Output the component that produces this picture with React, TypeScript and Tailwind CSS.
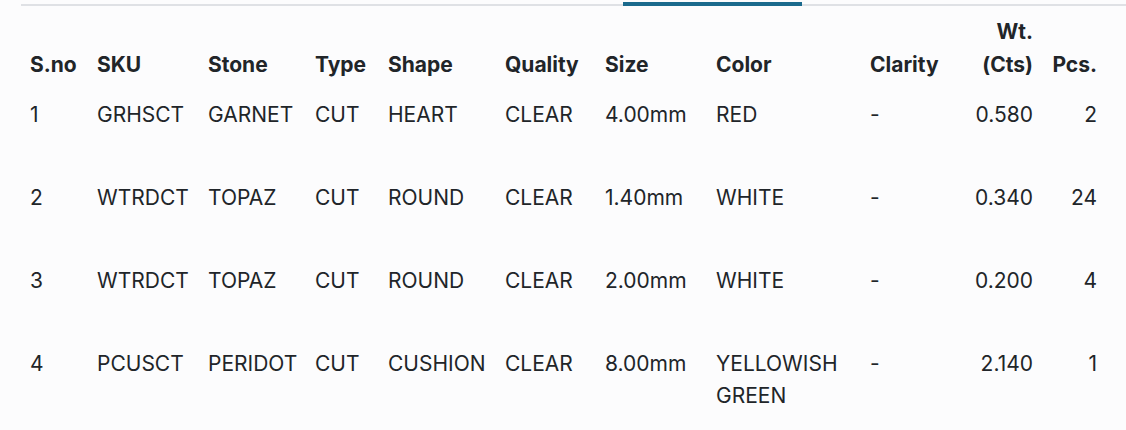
import React from 'react'

type Row = {
  sno: number;
  sku: string;
  stone: string;
  type: string;
  shape: string;
  quality: string;
  size: string;
  color: string;
  clarity: string;
  wt: string;
  pcs: number;
}

const rows: Row[] = [
  { sno: 1, sku: 'GRHSCT', stone: 'GARNET', type: 'CUT', shape: 'HEART', quality: 'CLEAR', size: '4.00mm', color: 'RED', clarity: '-', wt: '0.580', pcs: 2 },
  { sno: 2, sku: 'WTRDCT', stone: 'TOPAZ', type: 'CUT', shape: 'ROUND', quality: 'CLEAR', size: '1.40mm', color: 'WHITE', clarity: '-', wt: '0.340', pcs: 24 },
  { sno: 3, sku: 'WTRDCT', stone: 'TOPAZ', type: 'CUT', shape: 'ROUND', quality: 'CLEAR', size: '2.00mm', color: 'WHITE', clarity: '-', wt: '0.200', pcs: 4 },
  { sno: 4, sku: 'PCUSCT', stone: 'PERIDOT', type: 'CUT', shape: 'CUSHION', quality: 'CLEAR', size: '8.00mm', color: 'YELLOWISH GREEN', clarity: '-', wt: '2.140', pcs: 1 },
]

function App() {
  const th = 'pt-[9px] pb-[8px] font-bold leading-[33px] text-left align-bottom'
  const td = 'pt-[10px] pb-[41px] align-top'

  return (
    <div className="h-[430px] overflow-hidden bg-[#fcfcfd] text-[#212529] font-['Inter','Noto_Sans',sans-serif] text-[21px] leading-[32px]">
      {/* tabs underline */}
      <div className="flex items-end h-[6px] ml-[21px] border-b-2 border-[#dfe1e5]">
        <div className="ml-[602px] w-[179px] h-[4px] -mb-[2px] bg-[#1b6a8d]" />
      </div>

      <table className="table-fixed ml-[30px] w-[1067px] border-collapse">
        <thead>
          <tr>
            <th className={`${th} w-[67px]`}>S.no</th>
            <th className={`${th} w-[111px]`}>SKU</th>
            <th className={`${th} w-[107px]`}>Stone</th>
            <th className={`${th} w-[73px]`}>Type</th>
            <th className={`${th} w-[117px]`}>Shape</th>
            <th className={`${th} w-[100px]`}>Quality</th>
            <th className={`${th} w-[111px]`}>Size</th>
            <th className={`${th} w-[154px]`}>Color</th>
            <th className={`${th} w-[100px]`}>Clarity</th>
            <th className="pt-[9px] pb-[8px] font-bold leading-[33px] text-right align-bottom w-[63px]">Wt. (Cts)</th>
            <th className="pt-[9px] pb-[8px] font-bold leading-[33px] text-right align-bottom w-[64px]">Pcs.</th>
          </tr>
        </thead>
        <tbody>
          {rows.map((r) => (
            <tr key={r.sno}>
              <td className={td}>{r.sno}</td>
              <td className={td}>{r.sku}</td>
              <td className={td}>{r.stone}</td>
              <td className={td}>{r.type}</td>
              <td className={td}>{r.shape}</td>
              <td className={td}>{r.quality}</td>
              <td className={td}>{r.size}</td>
              <td className={`${td} pr-4`}>{r.color}</td>
              <td className={td}>{r.clarity}</td>
              <td className={`${td} text-right`}>{r.wt}</td>
              <td className={`${td} text-right`}>{r.pcs}</td>
            </tr>
          ))}
        </tbody>
      </table>
    </div>
  )
}

export default App
